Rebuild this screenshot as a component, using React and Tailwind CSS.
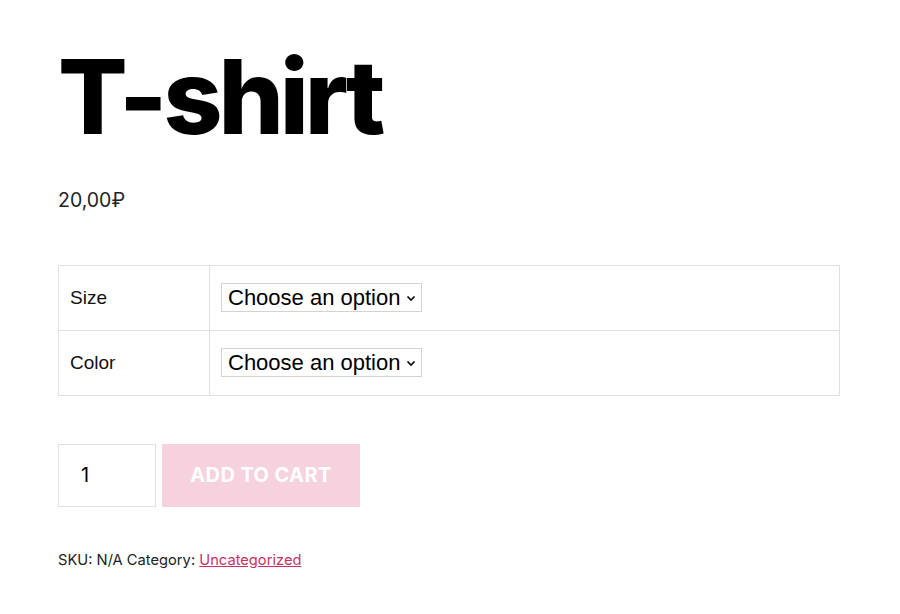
import React from 'react';

const rows = ['Size', 'Color'];

export default function App() {
  return (
    <div className="min-h-[614px] bg-white px-[58px] pt-[38px] text-black">
      <h1 className="font-['Inter',sans-serif] text-[103px] font-extrabold leading-[1.15] tracking-[-0.04em]">T-shirt</h1>

      <p className="mt-[30px] font-['Inter',sans-serif] text-[19.5px] text-[#222]">20,00₽</p>

      <table className="mt-[49px] w-[782px] border-collapse border border-[#e2e0dc] font-['Liberation_Sans',Arial,sans-serif]">
        <tbody>
          {rows.map((name) => (
            <tr key={name} className="h-[65px]">
              <td className="w-[151px] border border-[#e2e0dc] px-[11px] pt-[1px] text-[19px] text-[#111]">{name}</td>
              <td className="border border-[#e2e0dc] px-[11px]">
                <div className="inline-flex h-[29px] items-center border border-[#d6d3ce] pl-[6px] pr-[5px] text-[22px] text-black">
                  <span>Choose an option</span>
                  <svg className="ml-[6px] mt-[2px]" width="10" height="7" viewBox="0 0 10 7" fill="none" stroke="black" strokeWidth="1.6">
                    <path d="M1.5 1.5 L5 5 L8.5 1.5" />
                  </svg>
                </div>
              </td>
            </tr>
          ))}
        </tbody>
      </table>

      <div className="mt-[48px] flex gap-[6px]">
        <div className="flex h-[63px] w-[98px] items-center border border-[#e2e0dc] pl-[22px] font-['Inter',sans-serif] text-[20px]">1</div>
        <button className="h-[63px] w-[198px] bg-[#f5d2dd] font-['Inter',sans-serif] text-[20px] font-bold tracking-[0.02em] text-white">
          ADD TO CART
        </button>
      </div>

      <p className="mt-[42px] font-['Inter',sans-serif] text-[14.7px] text-[#222]">
        SKU: N/A Category:{' '}
        <a href="#" className="text-[#c7345f] underline">Uncategorized</a>
      </p>
    </div>
  );
}
